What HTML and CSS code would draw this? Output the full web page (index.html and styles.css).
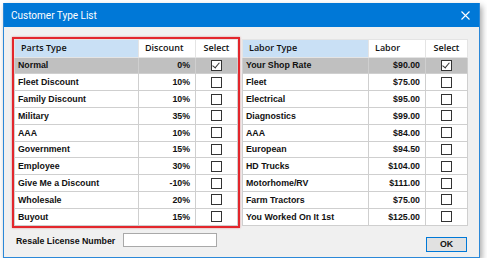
FILE: index.html
```html
<!DOCTYPE html>
<html>
<head>
    <title>Customer Type List</title>
    <link rel="stylesheet" href="styles.css">
</head>
<body>
    <div class="window">
        <div class="titlebar">
            <span class="title">Customer Type List</span>
            <svg class="close" width="9" height="9" viewBox="0 0 9 9"><path d="M0.5 0.5 L8.5 8.5 M8.5 0.5 L0.5 8.5" stroke="#fff" stroke-width="1.1" fill="none"/></svg>
        </div>
        <div class="content">
            <div class="tables">
                <div class="highlight">
                    <table class="grid">
                        <colgroup><col class="c-name"><col class="c-val"><col class="c-sel"></colgroup>
                        <tr class="head"><th class="sorted">Parts Type</th><th>Discount</th><th class="center">Select</th></tr>
                        <tr class="current"><td>Normal</td><td class="num">0%</td><td class="center"><span class="check on"></span></td></tr>
                        <tr><td>Fleet Discount</td><td class="num">10%</td><td class="center"><span class="check"></span></td></tr>
                        <tr><td>Family Discount</td><td class="num">10%</td><td class="center"><span class="check"></span></td></tr>
                        <tr><td>Military</td><td class="num">35%</td><td class="center"><span class="check"></span></td></tr>
                        <tr><td>AAA</td><td class="num">10%</td><td class="center"><span class="check"></span></td></tr>
                        <tr><td>Government</td><td class="num">15%</td><td class="center"><span class="check"></span></td></tr>
                        <tr><td>Employee</td><td class="num">30%</td><td class="center"><span class="check"></span></td></tr>
                        <tr><td>Give Me a Discount</td><td class="num">-10%</td><td class="center"><span class="check"></span></td></tr>
                        <tr><td>Wholesale</td><td class="num">20%</td><td class="center"><span class="check"></span></td></tr>
                        <tr><td>Buyout</td><td class="num">15%</td><td class="center"><span class="check"></span></td></tr>
                    </table>
                </div>
                <table class="grid labor">
                    <colgroup><col class="c-name2"><col class="c-val"><col class="c-sel"></colgroup>
                    <tr class="head"><th class="sorted">Labor Type</th><th>Labor</th><th class="center">Select</th></tr>
                    <tr class="current"><td>Your Shop Rate</td><td class="num">$90.00</td><td class="center"><span class="check on"></span></td></tr>
                    <tr><td>Fleet</td><td class="num">$75.00</td><td class="center"><span class="check"></span></td></tr>
                    <tr><td>Electrical</td><td class="num">$95.00</td><td class="center"><span class="check"></span></td></tr>
                    <tr><td>Diagnostics</td><td class="num">$99.00</td><td class="center"><span class="check"></span></td></tr>
                    <tr><td>AAA</td><td class="num">$84.00</td><td class="center"><span class="check"></span></td></tr>
                    <tr><td>European</td><td class="num">$94.50</td><td class="center"><span class="check"></span></td></tr>
                    <tr><td>HD Trucks</td><td class="num">$104.00</td><td class="center"><span class="check"></span></td></tr>
                    <tr><td>Motorhome/RV</td><td class="num">$111.00</td><td class="center"><span class="check"></span></td></tr>
                    <tr><td>Farm Tractors</td><td class="num">$75.00</td><td class="center"><span class="check"></span></td></tr>
                    <tr><td>You Worked On It 1st</td><td class="num">$125.00</td><td class="center"><span class="check"></span></td></tr>
                </table>
            </div>
            <div class="footer">
                <label class="resale-label">Resale License Number</label>
                <input class="resale-input" type="text">
                <button class="ok-button">OK</button>
            </div>
        </div>
    </div>
</body>
</html>
```

FILE: styles.css
```css
body {
    margin: 0;
    background-color: #ffffff;
    font-family: "Liberation Sans", Arial, sans-serif;
}

.window {
    margin: 3px 0 0 3px;
    width: 477px;
    height: 255px;
    box-sizing: border-box;
    border: 1px solid #2b88d8;
    border-top: none;
    background-color: #f0f0f0;
    box-shadow: 2px 3px 6px rgba(0, 0, 0, 0.35);
    display: flex;
    flex-direction: column;
}

.titlebar {
    height: 24px;
    background-color: #0078d7;
    color: #ffffff;
    display: flex;
    align-items: center;
    justify-content: space-between;
    padding: 1px 9px 0 7px;
    box-sizing: border-box;
    flex-shrink: 0;
}

.title {
    font-family: Roboto, "Liberation Sans", sans-serif;
    font-size: 10px;
}

.content {
    padding: 10px 0 0 8px;
}

.tables {
    display: flex;
    align-items: flex-start;
    gap: 2px;
}

/* red annotation frame around the parts grid */
.highlight {
    border: 2px solid #e3262c;
    box-shadow: 0 0 2px rgba(200, 0, 0, 0.4);
}

.grid {
    border-collapse: collapse;
    border: 1px solid #3c3c3c;
    background-color: #ffffff;
    font-size: 8.8px;
    font-weight: bold;
    color: #111111;
    table-layout: fixed;
}

.labor {
    margin-top: 2px;
}

.c-name { width: 124px; }
.c-name2 { width: 126px; }
.c-val { width: 57px; }
.c-sel { width: 42px; }

.grid td,
.grid th {
    height: 15.8px;
    line-height: 10px;
    padding: 0 5px 0 3px;
    border: 1px solid #cfcfcf;
    white-space: nowrap;
    overflow: hidden;
}

.grid th {
    height: 16.6px;
    text-align: left;
    font-family: "Open Sans", "Liberation Sans", sans-serif;
    font-weight: 600;
    font-size: 9px;
    padding-left: 6px;
    border-color: #e4e4e4;
}

.grid th.sorted {
    background-color: #c9e0f5;
}

.grid th.center,
.grid td.center {
    text-align: center;
    padding: 0;
}

.grid td.num {
    text-align: right;
}

.current td {
    background-color: #c0c0c0;
}

.check {
    display: inline-block;
    width: 9px;
    height: 9px;
    border: 1px solid #333333;
    background-color: #ffffff;
    vertical-align: middle;
    position: relative;
}

.check.on::after {
    content: "";
    position: absolute;
    left: 2px;
    top: 0px;
    width: 3px;
    height: 6px;
    border-right: 1px solid #333333;
    border-bottom: 1px solid #333333;
    transform: rotate(40deg);
}

.footer {
    display: flex;
    align-items: flex-start;
    padding: 5px 12px 0 4px;
}

.resale-label {
    font-size: 8.8px;
    font-weight: bold;
    color: #111111;
    margin-top: 3px;
    width: 107px;
}

.resale-input {
    width: 94px;
    height: 14px;
    box-sizing: border-box;
    border: 1px solid #a9a9a9;
    background-color: #ffffff;
    padding: 0;
}

.ok-button {
    margin-left: auto;
    margin-top: 4px;
    width: 41px;
    height: 15px;
    padding: 0;
    border: 1px solid #0078d7;
    background-color: #e1e1e1;
    font-family: "Liberation Sans", Arial, sans-serif;
    font-size: 8.8px;
    font-weight: bold;
    color: #111111;
}
```
